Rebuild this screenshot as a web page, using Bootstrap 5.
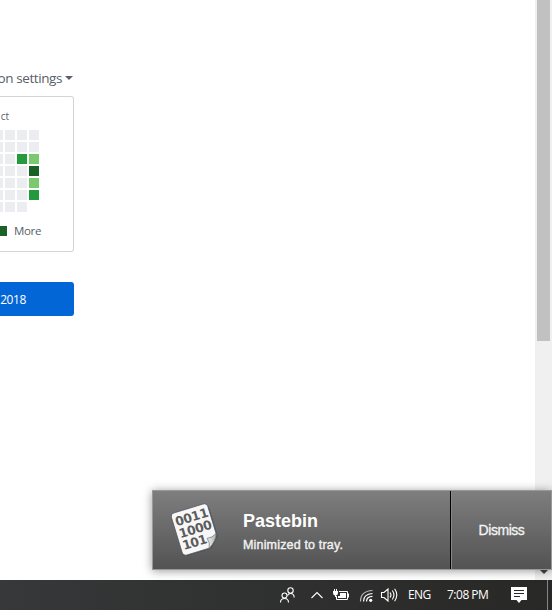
<!DOCTYPE html>
<html lang="en">
<head>
<meta charset="utf-8">
<title>Desktop</title>
<link rel="stylesheet" href="https://cdn.jsdelivr.net/npm/bootstrap@5.3.0/dist/css/bootstrap.min.css">
<style>
body{width:552px;height:610px;font-family:"Open Sans","Noto Sans",sans-serif;background:#fff;color:#586069}
.desktop-view{height:580px}
.profile{width:74px}
.settings{font-size:13.5px;line-height:20px;margin-top:68px;height:28px;letter-spacing:-.42px;padding-right:1px}
.settings span{margin-right:3px}
.caret{border:4px solid transparent;border-top-color:#586069;border-bottom:0;margin-top:8px}
.graph{height:156px;border:1px solid #d1d5da;border-left:0;border-radius:0 3px 3px 0}
.month{font-size:10px;line-height:14px;height:33px;padding:12px 64px 0 0}
.cells{display:grid;grid-template-columns:repeat(4,10px);grid-auto-rows:10px;gap:2px;padding-right:34px;justify-content:end}
.cells i,.swatch{background:#ebedf0}
.cells .g1{background:#7bc96f}.cells .g2{background:#239a3b}.cells .g3,.swatch.g3{background:#196127}
.legend{font-size:11.5px;line-height:16px;margin-top:11px;padding-right:32px;letter-spacing:-.35px}
.swatch{width:10px;height:10px;margin-right:7px;flex:none}
.year{height:34px;margin-top:30px;background:#0366d6;border-radius:0 3px 3px 0;font-size:12px;line-height:35px;padding-right:48px;color:#fff;letter-spacing:-.4px}
.scroll{width:17px;background:#f0f0f0}
.thumb{width:13px;height:341px;background:#c1c1c1}
.scroll-arrow{border:4px solid transparent;border-top-color:#444;border-bottom:0;margin-bottom:6px}
.notice{left:152px;top:490px;width:400px;height:80px;border:1px solid #999;background:linear-gradient(#7e7e7e,#535353);box-shadow:0 1px 9px rgba(0,0,0,.4);font-family:"Liberation Sans",Arial,sans-serif;color:#fff}
.notice-main{width:297px}
.notice-icon{margin-left:14px;flex:none}
.notice-title{font-size:18px;line-height:22px;font-weight:700;margin-top:3px}
.notice-text{font-size:12.5px;line-height:16px;margin-top:5px;color:#f1f1f1;-webkit-text-stroke:.4px #f1f1f1;letter-spacing:.17px}
.dismiss{border:0;border-left:1px solid #888;box-shadow:-1px 0 #000;background:none;font-size:14px;color:#f4f4f4;letter-spacing:-.45px;margin-left:1px;padding:1px 0 0;-webkit-text-stroke:.3px #f4f4f4}
.taskbar{height:30px;background:#2b2b2a linear-gradient(90deg,#363839,#282826);color:#fff;font-size:12px;line-height:30px}
.taskbar svg{flex:none;display:block}
.peek{width:5px;border-left:1px solid #858585}
.lang{width:24px;margin-left:8px;letter-spacing:-.6px}
.clock{width:44px;margin-left:15px;letter-spacing:-.5px}
</style>
<script src="https://cdn.jsdelivr.net/npm/bootstrap@5.3.0/dist/js/bootstrap.bundle.min.js"></script>
</head>
<body class="m-0 overflow-hidden position-relative">
<main class="desktop-view d-flex justify-content-between">
  <section class="profile overflow-hidden">
    <div class="settings d-flex justify-content-end text-nowrap"><span>on settings</span><div class="caret"></div></div>
    <div class="graph overflow-hidden">
      <div class="month text-end">ct</div>
      <div class="cells">
        <i></i><i></i><i></i><i></i>
        <i></i><i></i><i></i><i></i>
        <i></i><i></i><i class="g2"></i><i class="g1"></i>
        <i></i><i></i><i></i><i class="g3"></i>
        <i></i><i></i><i></i><i class="g1"></i>
        <i></i><i></i><i></i><i class="g2"></i>
        <i></i><i></i><i></i>
      </div>
      <div class="legend d-flex justify-content-end align-items-center"><div class="swatch g3"></div><span>More</span></div>
    </div>
    <div class="year text-end">2018</div>
  </section>
  <aside class="scroll d-flex flex-column align-items-center justify-content-between"><div class="thumb"></div><div class="scroll-arrow"></div></aside>
</main>
<footer class="taskbar d-flex align-items-center justify-content-end">
  <svg width="126" height="30" viewBox="275 580 126 30" fill="none" stroke="#fff" stroke-width="1.1">
    <circle cx="285.500" cy="595.500" r="2.500"/><path d="M281.500 602.500q0-4 4-4t4 4"/>
    <circle cx="291.500" cy="590.500" r="2.700"/><path d="M288.500 595.500q1-2 3-2 3.500 0 3.700 4"/>
    <path d="M312.500 598l5.500-5.500 5.500 5.500"/>
    <path stroke-width="1" d="M340 591.500h8.500v8h-11v-3.500M349.500 593.500v4"/>
    <path fill="#fff" stroke="none" d="M341 593h6v5h-8v-2h2zM334 591h5v2q0 2-2 2.500v1.500h-1v-1.500q-2-.5-2-2.500z"/>
    <path stroke-width="1" d="M335.500 591v-2M337.500 591v-2"/>
    <g stroke-width="1.200"><path stroke="#bbb" d="M361.500 601.500q0-10.500 12-11"/><path d="M364.500 601.500q0-7.500 9-8M367.500 601.500q0-5 6-5.200"/></g>
    <circle cx="371.700" cy="600.300" r="1.600" fill="#fff" stroke="none"/>
    <path d="M382.500 592.500h2.500l4-3.500v12l-4-3.500h-2.500zM391 592.500q2 2.500 0 5M393.300 590.500q3.300 4.500 0 9M395.600 588.800q4.400 6.200 0 12.400"/>
  </svg>
  <span class="lang text-nowrap">ENG</span>
  <span class="clock text-nowrap">7:08 PM</span>
  <svg width="56" height="30" viewBox="491 580 56 30"><path fill="#fff" d="M511 587h16v13h-5.500l-2.500 3-2.500-3H511z"/><path stroke="#292929" d="M514 590.500h10M514 593.500h10M514 596.500h6"/></svg>
  <div class="peek align-self-stretch"></div>
</footer>
<div class="notice position-absolute d-flex" role="alert">
  <div class="notice-main d-flex align-items-center">
    <svg class="notice-icon" width="56" height="62" viewBox="0 0 56 62">
      <defs><linearGradient id="fold"><stop stop-color="#eee"/><stop offset="1" stop-color="#aaa"/></linearGradient></defs>
      <g transform="translate(28 30.5) rotate(-17)">
        <path fill="#303030" opacity=".4" d="M-14-20h30q4 0 4 4V13L10 23h-24q-4 0-4-4v-35q0-4 4-4z"/>
        <path fill="#f7f7f7" stroke="#4b5560" stroke-width=".7" d="M-15-22h30q4 0 4 4V11Q18 15 9 22h-24q-4 0-4-4v-36q0-4 4-4z"/>
        <g fill="#5c5c5c" font-family="DejaVu Sans,sans-serif" font-size="12.500" font-weight="700"><text x="-16.500" y="-8.500" textLength="34">0011</text><text x="-16.500" y="4" textLength="34">1000</text><text x="-16.500" y="16.500" textLength="25">101</text></g>
        <path fill="url(#fold)" stroke="#6b6b6b" stroke-width=".6" d="M8 22q3-5 1-10 5 1 10-2-2 7-11 12z"/>
      </g>
    </svg>
    <div class="ms-3 ps-1"><div class="notice-title">Pastebin</div><div class="notice-text">Minimized to tray.</div></div>
  </div>
  <button class="dismiss flex-grow-1" type="button">Dismiss</button>
</div>
</body>
</html>
